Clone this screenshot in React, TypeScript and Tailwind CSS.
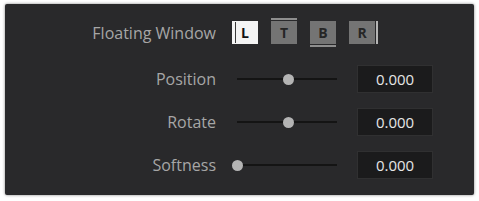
import React from "react";

type Edge = "L" | "T" | "B" | "R";

function EdgeButton({ edge, active }: { edge: Edge; active?: boolean }) {
	return (
		<div
			className={`relative w-[26px] h-[23px] flex items-center justify-center text-[14px] font-bold ${
				active ? "bg-[#f4f4f4] text-[#111]" : "bg-[#747474] text-[#262626]"
			}`}
		>
			{edge === "L" && (
				<span className="absolute left-[3px] top-[1px] bottom-[1px] w-[1px] bg-[#3a3a3a]" />
			)}
			{edge === "T" && (
				<span className="absolute left-0 right-0 -top-[3px] h-[2px] bg-[#8e8e8e]" />
			)}
			{edge === "B" && (
				<span className="absolute left-0 right-0 -bottom-[3px] h-[2px] bg-[#8e8e8e]" />
			)}
			{edge === "R" && (
				<span className="absolute -right-[3px] top-0 bottom-0 w-[2px] bg-[#b5b5b5]" />
			)}
			{edge}
		</div>
	);
}

function SliderRow({ label, pos }: { label: string; pos: number }) {
	return (
		<div className="flex items-center h-[28px]">
			<div className="w-[211px] text-right text-[16px] text-[#a6a6a6]">{label}</div>
			<div className="relative ml-[21px] w-[100px] h-[11px] flex items-center">
				<div className="w-full h-[2px] bg-[#141414]" />
				<div
					className="absolute top-0 w-[11px] h-[11px] rounded-full bg-[#b4b4b4]"
					style={{ left: `${pos - 5}px` }}
				/>
			</div>
			<div className="ml-[20px] w-[76px] h-[28px] flex items-center justify-center bg-[#1b1b1c] border border-[#303031] text-[15px] text-[#e6e6e6]">
				0.000
			</div>
		</div>
	);
}

export default function App() {
	return (
		<div
			className="w-[479px] h-[201px] bg-white pt-[4px] pl-[5px]"
			style={{ fontFamily: '"Open Sans", "Noto Sans", sans-serif' }}
		>
			<div className="w-[469px] h-[191px] bg-[#29292b] rounded-[2px] shadow-[0_0_3px_rgba(0,0,0,0.5)] pt-[17px] flex flex-col">
				<div className="flex items-center h-[23px]">
					<div className="w-[211px] text-right text-[16px] text-[#a6a6a6]">Floating Window</div>
					<div className="ml-[16px] flex gap-[13px]">
						<EdgeButton edge="L" active />
						<EdgeButton edge="T" />
						<EdgeButton edge="B" />
						<EdgeButton edge="R" />
					</div>
				</div>
				<div className="mt-[21px] flex flex-col gap-[15px]">
					<SliderRow label="Position" pos={51} />
					<SliderRow label="Rotate" pos={51} />
					<SliderRow label="Softness" pos={0} />
				</div>
			</div>
		</div>
	);
}
